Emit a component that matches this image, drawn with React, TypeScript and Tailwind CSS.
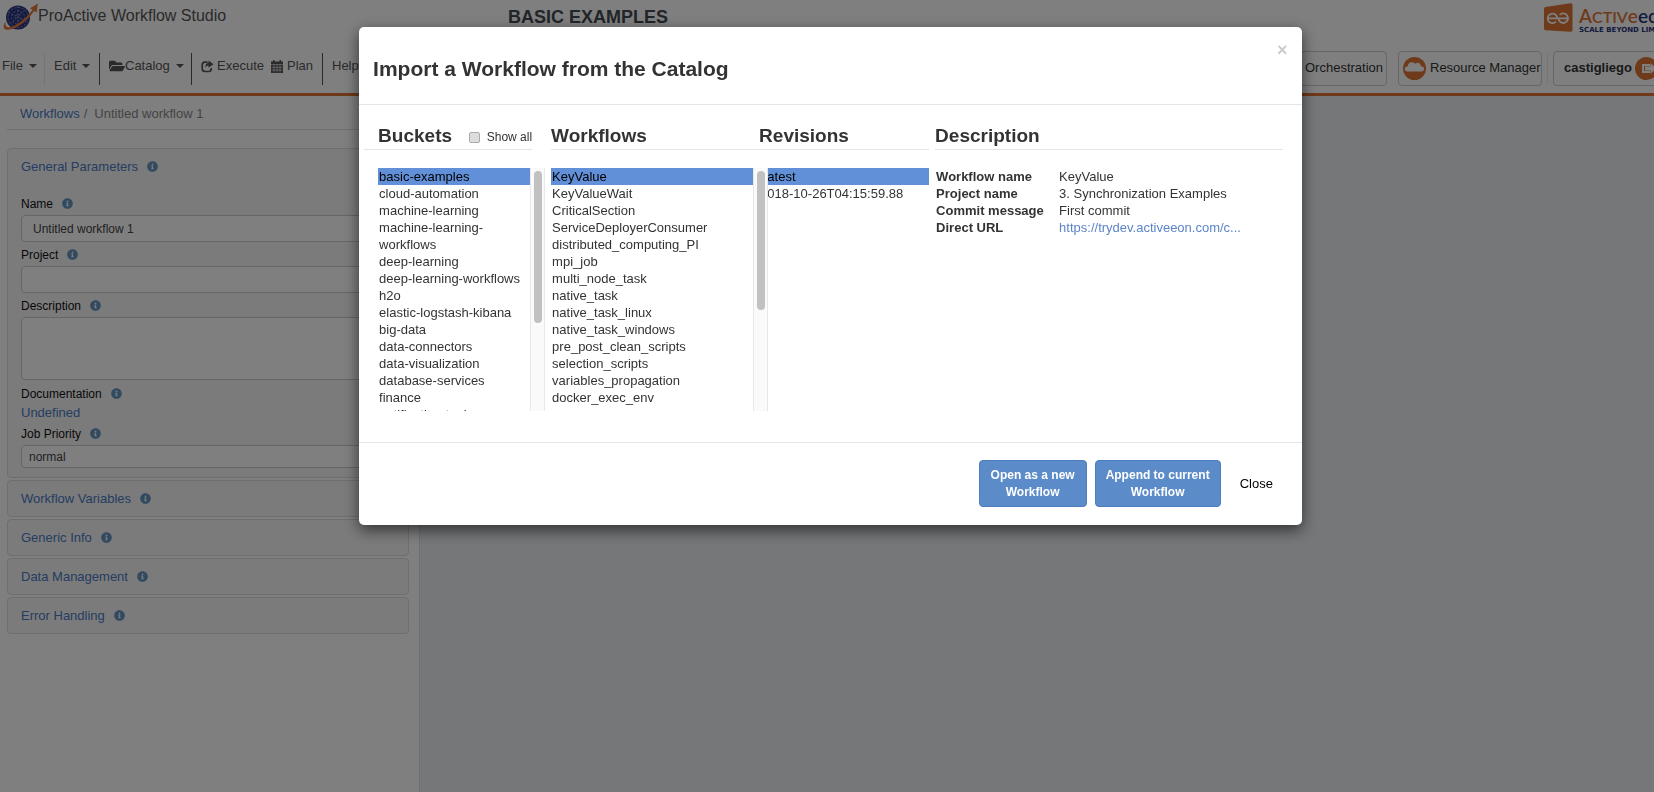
import { useState, type ReactNode } from "react";
import { FaFolderOpen, FaInfoCircle } from "react-icons/fa";

const buckets = [
    "basic-examples",
    "cloud-automation",
    "machine-learning",
    "machine-learning-workflows",
    "deep-learning",
    "deep-learning-workflows",
    "h2o",
    "elastic-logstash-kibana",
    "big-data",
    "data-connectors",
    "data-visualization",
    "database-services",
    "finance",
    "notification-tools",
];

const workflows = [
    "KeyValue",
    "KeyValueWait",
    "CriticalSection",
    "ServiceDeployerConsumer",
    "distributed_computing_PI",
    "mpi_job",
    "multi_node_task",
    "native_task",
    "native_task_linux",
    "native_task_windows",
    "pre_post_clean_scripts",
    "selection_scripts",
    "variables_propagation",
    "docker_exec_env",
];

const revisions = ["Latest", "2018-10-26T04:15:59.88"];

const closedPanels = ["Workflow Variables", "Generic Info", "Data Management", "Error Handling"];

function GlobeLogo() {
    return (
        <svg className="w-9 h-8 shrink-0" viewBox="0 0 36 32" aria-hidden="true">
            <circle cx="16" cy="17.5" r="12" fill="#2b3580" />
            <g fill="none" stroke="#8d95c8" strokeWidth="0.9" strokeDasharray="2 1.6">
                <circle cx="16" cy="17.5" r="10" />
                <circle cx="16" cy="17.5" r="6.5" />
                <circle cx="16" cy="17.5" r="3" />
                <path d="M6 12l19 10M8 24l15-14M16 6v22" />
            </g>
            <path
                d="M3.500 21.500C0.500 26 1 30 5.500 29.800C15 29.500 25.500 21 32 11L34.500 12.500L36 3.500L28 8.200L30.500 9.700C23.500 19 13.500 26.500 7 27.200C4 27.500 3 25 3.500 21.500Z"
                fill="#e07a3c"
            />
        </svg>
    );
}

function ActiveeonLogo() {
    return (
        <div className="w-[110px] h-8 shrink-0 flex items-start whitespace-nowrap">
            <svg className="w-[29px] h-[29px] mt-[3px] mr-[6px] shrink-0" viewBox="0 0 29 29" aria-hidden="true">
                <path d="M1.500 4L26.500 0.200Q28.500 0 28.500 2V27Q28.500 29 26.500 28.800L1.500 27.200Q0 27 0 25.500V5.700Q0 4.300 1.500 4Z" fill="#dc7434" />
                <g fill="none" stroke="#fff" strokeWidth="1.800">
                    <path d="M3.700 15.300H13.300A4.800 4.800 0 1 0 12 18.700" />
                    <path d="M24 15.300H14.400A4.800 4.800 0 1 0 15.700 11.900" />
                </g>
            </svg>
            <div className="pt-[7px] font-[Lato,sans-serif] text-[#27357a]">
                <div className="text-[19px] leading-[18px] font-semibold">
                    <span className="text-[#dc7434]">
                        A<span className="text-[16px]">CTIV</span>e
                    </span>
                    eon
                </div>
                <div className="font-['DejaVu_Sans',sans-serif] text-[7px] leading-[8px] font-bold">SCALE BEYOND LIMITS</div>
            </div>
        </div>
    );
}

function ExecuteIcon() {
    return (
        <svg className="w-[13px] h-[13px]" viewBox="0 0 13 13" aria-hidden="true">
            <path d="M6.500 2.200H4Q1.200 2.200 1.200 5V8.500Q1.200 11.500 4 11.500H7.500Q10.300 11.500 10.300 8.800V8" fill="none" stroke="currentColor" strokeWidth="1.700" />
            <path d="M7.500 0.500L12.500 4.200L7.500 7.800V5.600Q5.500 5.500 4.300 8Q4.200 3.200 7.500 2.800Z" fill="currentColor" />
        </svg>
    );
}

function CalendarIcon() {
    return (
        <svg className="w-3 h-[13px]" viewBox="0 0 12 13" aria-hidden="true">
            <path d="M0 1.500H2V0H3.500V1.500H8.500V0H10V1.500H12V4H0Z" fill="currentColor" />
            <path d="M0 4.600H12V13H0Z" fill="currentColor" />
            <path d="M0.500 7.300H11.500M0.500 10H11.500M3 5V12.500M6 5V12.500M9 5V12.500" stroke="#fff" strokeWidth="0.600" />
        </svg>
    );
}

function CloudIcon() {
    return (
        <svg className="w-[23px] h-[23px] shrink-0" viewBox="0 0 23 23" aria-hidden="true">
            <circle cx="11.500" cy="11.500" r="11.500" fill="#dc7434" />
            <path d="M3.500 14.500Q1 13.500 2 10.800Q2.800 9 4.800 9.200Q5.200 5.500 8.500 5.200Q11 5 12.200 6.800Q14.500 4.800 16.700 6.500Q18.200 7.700 17.700 9.200Q20.800 9 21.200 11.500Q21.300 13.900 19 14.500Z" fill="#fff" />
        </svg>
    );
}

function LogoutIcon() {
    return (
        <svg className="w-[23px] h-[23px] shrink-0" viewBox="0 0 23 23" aria-hidden="true">
            <circle cx="11.500" cy="11.500" r="11.500" fill="#dc7434" />
            <path d="M15 8H8V15H15" fill="none" stroke="#fff" strokeWidth="2" />
            <path d="M10 9.500H15.500V6L21.500 11.500L15.500 17V13.500H10Z" fill="#fff" />
        </svg>
    );
}

function Caret() {
    return <span className="inline-block ml-[6px] border-x-4 border-t-4 border-x-transparent border-t-current" />;
}

function Info() {
    return <FaInfoCircle className="w-[11px] h-[11px] ml-[9px] shrink-0 text-[#6595be]" />;
}

function Header() {
    const navButton = "h-[35px] pb-px flex items-center rounded-[4px] border border-[#ccc] text-[#333] text-[13px]";
    return (
        <header className="h-24 overflow-hidden border-b-3 border-[#dc7434] bg-white text-[#555]">
            <div className="h-[51px] grid grid-cols-[508px_1fr_auto] items-start">
                <div className="flex items-center pl-[2px]">
                    <GlobeLogo />
                    <span className="text-[16px]">ProActive Workflow Studio</span>
                </div>
                <h1 className="leading-[34px] text-[18px] font-bold text-[#444a52]">BASIC EXAMPLES</h1>
                <ActiveeonLogo />
            </div>
            <div className="flex items-start text-[13px]">
                <nav className="flex items-center h-8 mt-[2px] [&>button]:h-[26px] [&>button]:mb-[6px] [&>button]:flex [&>button]:items-center">
                    <button className="w-[44px] pl-[2px]">File<Caret /></button>
                    <span className="w-px h-8 bg-[#e8e8e8]" />
                    <button className="w-[54px] pl-[9px]">Edit<Caret /></button>
                    <span className="w-px h-8 bg-[#555]" />
                    <button className="w-[91px] pl-[9px]"><FaFolderOpen className="w-4 h-4" />Catalog<Caret /></button>
                    <span className="w-px h-8 bg-[#555]" />
                    <button className="w-[79px] pl-[9px] gap-[3px]"><ExecuteIcon />Execute</button>
                    <button className="w-[51px] gap-1"><CalendarIcon />Plan</button>
                    <span className="w-px h-8 bg-[#555]" />
                    <button className="pl-[9px]">Help</button>
                </nav>
                <div className="ml-auto -mr-3 flex items-center">
                    <button className={`${navButton} w-[88px] pl-[5px] mr-[11px]`}>Orchestration</button>
                    <button className={`${navButton} w-[144px] pl-1 gap-1 mr-[5px] whitespace-nowrap`}><CloudIcon />Resource Manager</button>
                    <span className="w-px h-[31px] bg-[#e8e8e8] mr-[5px]" />
                    <button className={`${navButton} w-[113px] pl-[10px] gap-[3px] font-bold`}>castigliego<LogoutIcon /></button>
                </div>
            </div>
        </header>
    );
}

function FieldLabel({ htmlFor, children }: { htmlFor?: string; children: ReactNode }) {
    return (
        <label htmlFor={htmlFor} className="h-[23px] flex items-center text-[12px] text-[#111]">
            {children}
            <Info />
        </label>
    );
}

function Sidebar() {
    const field = "block w-full mb-px rounded-[4px] border border-[#ccc] bg-white text-[12px] text-[#444]";
    return (
        <aside className="w-[420px] shrink-0 border-r border-[#ddd] bg-white">
            <div className="mx-[7px] h-[34px] pt-[2px] border-b border-[#ddd] pl-[13px] flex items-center text-[13px] text-[#888]">
                <a href="#" className="text-[#4a7ac4]">Workflows</a>
                <span className="px-1">/</span>
                <span className="pl-[3px]">Untitled workflow 1</span>
            </div>

            <div className="ml-[7px] mr-[10px] mt-[18px] flex flex-col gap-[2px]">
                <section className="rounded-[4px] border border-[#ddd] bg-[#f7f7f7] px-[13px] pb-2">
                    <a href="#" className="h-[35px] mb-2 flex items-center text-[13px] text-[#4a7ac4]">General Parameters<Info /></a>
                    <FieldLabel htmlFor="name">Name</FieldLabel>
                    <input id="name" defaultValue="Untitled workflow 1" className={`${field} h-[27px] px-[11px]`} />
                    <FieldLabel htmlFor="project">Project</FieldLabel>
                    <input id="project" className={`${field} h-[27px] px-[11px]`} />
                    <FieldLabel htmlFor="description">Description</FieldLabel>
                    <textarea id="description" className={`${field} h-[63px] resize-none`} />
                    <div className="pt-px">
                        <FieldLabel>Documentation</FieldLabel>
                    </div>
                    <a href="#" className="block h-[17px] leading-4 text-[13px] text-[#4a7ac4]">Undefined</a>
                    <FieldLabel htmlFor="priority">Job Priority</FieldLabel>
                    <select id="priority" className={`${field} h-[23px] px-[7px] appearance-none`}>
                        <option>normal</option>
                    </select>
                </section>
                {closedPanels.map((name) => (
                    <a
                        key={name}
                        href="#"
                        className="h-[37px] px-[13px] flex items-center rounded-[4px] border border-[#ddd] bg-[#f7f7f7] text-[13px] text-[#4a7ac4]"
                    >
                        {name}
                        <Info />
                    </a>
                ))}
            </div>
        </aside>
    );
}

function PickList({ items, selected, onSelect }: { items: string[]; selected: string; onSelect: (item: string) => void }) {
    return (
        <ul className="h-[243px] flex-1 min-w-0 overflow-hidden">
            {items.map((item) => (
                <li key={item}>
                    <button
                        onClick={() => onSelect(item)}
                        className={`block w-full pl-px text-left text-[13px] leading-[17px] ${item === selected ? "bg-[#6290d8] text-black" : "text-[#333]"}`}
                    >
                        {item}
                    </button>
                </li>
            ))}
        </ul>
    );
}

function ScrollTrack({ thumb }: { thumb: string }) {
    return (
        <div className="w-[15px] shrink-0 border-x border-[#e8e8e8] bg-[#fafafa] pt-[3px]">
            <div className={`w-2 mx-auto rounded-full bg-[#c1c1c1] ${thumb}`} />
        </div>
    );
}

function ColumnTitle({ children }: { children: ReactNode }) {
    return <h4 className="text-[19px] leading-[26px] font-bold text-[#333]">{children}</h4>;
}

function ImportDialog() {
    const [bucket, setBucket] = useState("basic-examples");
    const [workflow, setWorkflow] = useState("KeyValue");
    const [revision, setRevision] = useState("Latest");
    const titleRow = "h-[27px] mb-[18px] flex items-center border-b border-[#e5e5e5]";
    const primary = "h-[47px] pt-[2px] rounded-[4px] border border-[#4c7dbf] bg-[#5b8bc9] text-[12px] leading-[17px] font-bold text-white";

    return (
        <div role="dialog" aria-labelledby="dialog-title" className="w-[57vw] min-w-[900px] mt-[27px] rounded-[5px] bg-white shadow-[0_5px_15px_rgba(0,0,0,0.6)]">
            <div className="h-[78px] px-[14px] flex items-start justify-between border-b border-[#e5e5e5]">
                <h3 id="dialog-title" className="pt-7 text-[21px] leading-[28px] font-bold text-[#333]">Import a Workflow from the Catalog</h3>
                <button aria-label="Close dialog" className="mt-[14px] w-[11px] h-[18px] flex items-center justify-center text-[18px] font-bold text-[#ccc]">×</button>
            </div>

            <div className="h-[337px] pt-[18px] pl-[5px] pr-[19px] flex items-start">
                <section className="w-[181px] shrink-0 mr-[6px]">
                    <div className={`${titleRow} mr-[13px] pl-[14px] justify-between`}>
                        <ColumnTitle>Buckets</ColumnTitle>
                        <label className="pt-[2px] flex items-center gap-[7px] text-[12px] text-[#333]">
                            <input type="checkbox" className="appearance-none w-[11px] h-[11px] rounded-[2px] border border-[#aaa] bg-[#ddd]" />
                            Show all
                        </label>
                    </div>
                    <div className="pl-[14px] flex">
                        <PickList items={buckets} selected={bucket} onSelect={setBucket} />
                        <ScrollTrack thumb="h-[152px]" />
                    </div>
                </section>

                <section className="w-[208px] shrink-0 relative z-10">
                    <div className={titleRow}>
                        <ColumnTitle>Workflows</ColumnTitle>
                    </div>
                    <div className="-mr-[9px] flex">
                        <PickList items={workflows} selected={workflow} onSelect={setWorkflow} />
                        <ScrollTrack thumb="h-[139px]" />
                    </div>
                </section>

                <section className="w-[170px] shrink-0 mr-[6px]">
                    <div className={titleRow}>
                        <ColumnTitle>Revisions</ColumnTitle>
                    </div>
                    <div className="flex">
                        <PickList items={revisions} selected={revision} onSelect={setRevision} />
                    </div>
                </section>

                <section className="flex-1 min-w-0">
                    <div className={titleRow}>
                        <ColumnTitle>Description</ColumnTitle>
                    </div>
                    <table className="w-full table-fixed text-left text-[13px] leading-[17px] text-[#333] [&_th]:w-[124px] [&_th]:p-0 [&_th]:pl-px [&_td]:p-0">
                        <tbody>
                            <tr><th>Workflow name</th><td>KeyValue</td></tr>
                            <tr><th>Project name</th><td>3. Synchronization Examples</td></tr>
                            <tr><th>Commit message</th><td>First commit</td></tr>
                            <tr><th>Direct URL</th><td><a href="#" className="text-[#5b85c8]">https://trydev.activeeon.com/c...</a></td></tr>
                        </tbody>
                    </table>
                </section>
            </div>

            <div className="h-[83px] pr-[29px] pb-[2px] flex items-center justify-end border-t border-[#e5e5e5]">
                <button className={`${primary} w-[108px] mr-2`}>Open as a new Workflow</button>
                <button className={`${primary} w-[126px] mr-[19px]`}>Append to current Workflow</button>
                <button className="pt-[2px] text-[13px] text-black">Close</button>
            </div>
        </div>
    );
}

export default function App() {
    return (
        <div className="min-h-screen flex flex-col bg-[#eceef1] font-['Liberation_Sans',Arial,sans-serif]">
            <Header />
            <main className="flex-1 flex">
                <Sidebar />
            </main>
            <div className="fixed inset-0 z-20 pl-[7px] flex items-start justify-center bg-black/50">
                <ImportDialog />
            </div>
        </div>
    );
}
